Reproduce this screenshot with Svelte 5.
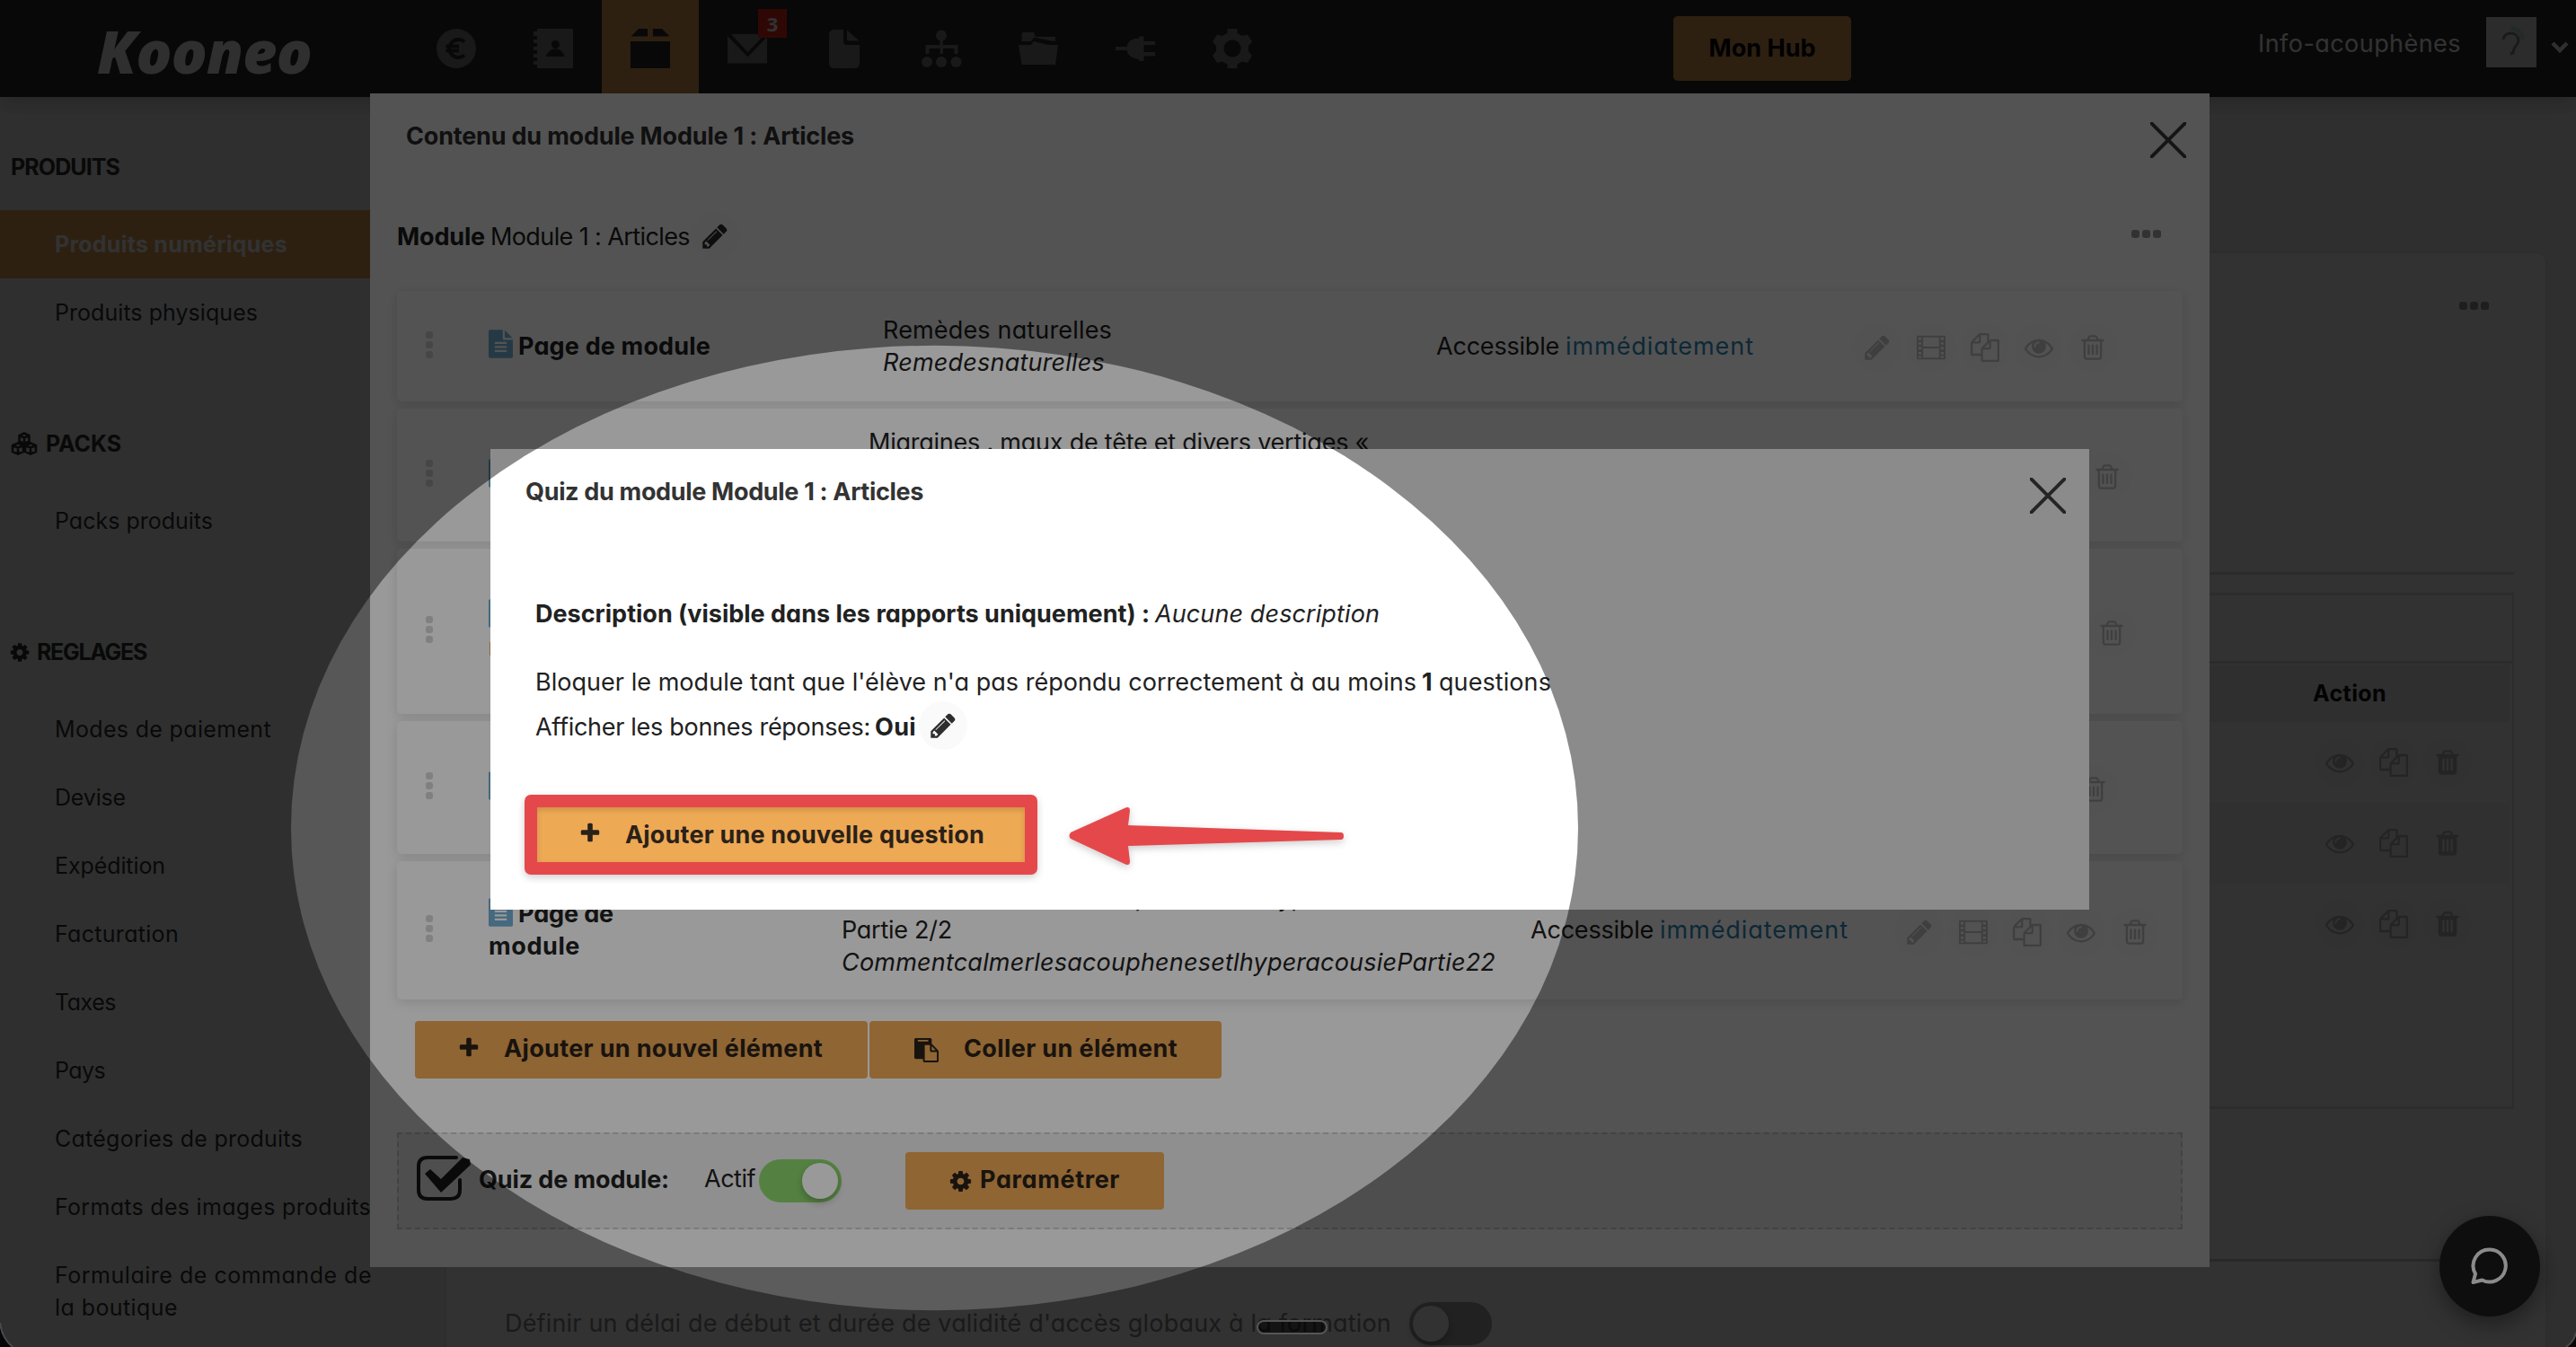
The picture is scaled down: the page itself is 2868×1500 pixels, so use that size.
<script>
  // Spreads the letters of a label so that it fills the given width.
  function fit(node, width) {
    const apply = () => {
      node.style.letterSpacing = '0px';
      const natural = node.getBoundingClientRect().width;
      const count = node.textContent.length;
      node.style.letterSpacing = (width - 1 - natural) / count + 'px';
    };
    apply();
    document.fonts?.ready.then(apply);
  }

  const trashBase =
    'm128 724v-948h-896v948q0 22 7 40.500t14.500 27 10.500 8.500h832q3 0 10.500-8.500t14.500-27 7-40.500zm-672-1076h448l-48-117q-7-9-17-11h-317q-10 2-17 11z';
  const trashLid =
    'm928 32v64q0 14-9 23t-23 9h-96v948q0 83-47 143.500t-113 60.500h-832q-66 0-113-58.500t-47-141.500v-952h-96q-14 0-23-9t-9-23v-64q0-14 9-23t23-9h309l70-167q15-37 54-63t79-26h320q40 0 79 26t54 63l70 167h309q14 0 23 9t9 23z';

  const glyphs = {
    trash:
      'M704 736v576q0 14-9 23t-23 9h-64q-14 0-23-9t-9-23v-576q0-14 9-23t23-9h64q14 0 23 9t9 23zm256 0v576q0 14-9 23t-23 9h-64q-14 0-23-9t-9-23v-576q0-14 9-23t23-9h64q14 0 23 9t9 23zm256 0v576q0 14-9 23t-23 9h-64q-14 0-23-9t-9-23v-576q0-14 9-23t23-9h64q14 0 23 9t9 23z' +
      trashBase + trashLid,
    trashFull:
      'M704 1376v-704q0-14-9-23t-23-9h-64q-14 0-23 9t-9 23v704q0 14 9 23t23 9h64q14 0 23-9t9-23zm256 0v-704q0-14-9-23t-23-9h-64q-14 0-23 9t-9 23v704q0 14 9 23t23 9h64q14 0 23-9t9-23zm256 0v-704q0-14-9-23t-23-9h-64q-14 0-23 9t-9 23v704q0 14 9 23t23 9h64q14 0 23-9t9-23zm-544-992h448l-48-117q-7-9-17-11h-317q-10 2-17 11z' +
      trashLid,
    pencil:
      'M491 1536l91-91-235-235-91 91v107h128v128h107zm523-928q0-22-22-22-10 0-17 7l-542 542q-7 7-7 17 0 22 22 22 10 0 17-7l542-542q7-7 7-17zm-54-192l416 416-832 832h-416v-416zm683 96q0 53-37 90l-166 166-416-416 166-165q36-38 90-38 53 0 91 38l235 234q37 39 37 91z',
    eye: 'M1664 960q-152-236-381-353 61 104 61 225 0 185-131.500 316.500t-316.500 131.500-316.500-131.500-131.500-316.500q0-121 61-225-229 117-381 353 133 205 333.500 326.500t434.500 121.500 434.500-121.500 333.500-326.500zm-720-384q0-20-14-34t-34-14q-125 0-214.500 89.500t-89.500 214.500q0 20 14 34t34 14 34-14 14-34q0-86 61-147t147-61q20 0 34-14t14-34zm848 384q0 34-20 69-140 230-376.500 368.500t-499.500 138.500-499.500-139-376.500-368q-20-35-20-69t20-69q140-229 376.500-368t499.500-139 499.500 139 376.500 368q20 35 20 69z',
    copy: 'M1696 384q40 0 68 28t28 68v1216q0 40-28 68t-68 28h-960q-40 0-68-28t-28-68v-288h-544q-40 0-68-28t-28-68v-672q0-40 20-88t48-76l408-408q28-28 76-48t88-20h416q40 0 68 28t28 68v328q68-40 128-40h416zm-544 213l-299 299h299v-299zm-640-384l-299 299h299v-299zm196 647l316-316v-416h-384v416q0 40-28 68t-68 28h-416v640h512v-256q0-40 20-88t48-76zm956 804v-1152h-384v416q0 40-28 68t-68 28h-416v640h896z',
    film: 'M64 160h1664q64 0 64 64v1344q0 64-64 64h-1664q-64 0-64-64v-1344q0-64 64-64zM110 270v150h180v-150zm0 300v150h180v-150zm0 300v150h180v-150zm0 300v150h180v-150zm0 260v110h180v-110zM400 270v570h990v-570zm0 680v570h990v-570zM1500 270v150h180v-150zm0 300v150h180v-150zm0 300v150h180v-150zm0 300v150h180v-150zm0 260v110h180v-110z',
    cog: 'M1152 896q0-106-75-181t-181-75-181 75-75 181 75 181 181 75 181-75 75-181zm512-109v222q0 12-8 23t-20 13l-185 28q-19 54-39 91 35 50 107 138 10 12 10 25t-9 23q-27 37-99 108t-94 71q-12 0-26-9l-138-108q-44 23-91 38-16 136-29 186-7 28-36 28h-222q-14 0-24.500-8.500t-11.500-21.500l-28-184q-49-16-90-37l-141 107q-10 9-25 9-14 0-25-11-126-114-165-168-7-10-7-23 0-12 8-23 15-21 51-66.500t54-70.500q-27-50-41-99l-183-27q-13-2-21-12.500t-8-23.500v-222q0-12 8-23t19-13l186-28q14-46 39-92-40-57-107-138-10-12-10-24 0-10 9-23 26-36 98.500-107.500t94.500-71.500q13 0 26 10l138 107q44-23 91-38 16-136 29-186 7-28 36-28h222q14 0 24.500 8.500t11.500 21.500l28 184q49 16 90 37l142-107q9-9 24-9 13 0 25 10 129 119 165 170 7 8 7 22 0 12-8 23-15 21-51 66.500t-54 70.500q26 50 41 98l183 28q13 2 21 12.500t8 23.500z',
    plus: 'M1600 736v192q0 40-28 68t-68 28h-416v416q0 40-28 68t-68 28h-192q-40 0-68-28t-28-68v-416h-416q-40 0-68-28t-28-68v-192q0-40 28-68t68-28h416v-416q0-40 28-68t68-28h192q40 0 68 28t28 68v416h416q40 0 68 28t28 68z',
    file: 'M1596 476q14 14 28 36h-472v-472q22 14 36 28zm-476 164h544v1056q0 40-28 68t-68 28h-1344q-40 0-68-28t-28-68v-1600q0-40 28-68t68-28h800v544q0 40 28 68t68 28zm160 736v-64q0-14-9-23t-23-9h-704q-14 0-23 9t-9 23v64q0 14 9 23t23 9h704q14 0 23-9t9-23zm0-256v-64q0-14-9-23t-23-9h-704q-14 0-23 9t-9 23v64q0 14 9 23t23 9h704q14 0 23-9t9-23zm0-256v-64q0-14-9-23t-23-9h-704q-14 0-23 9t-9 23v64q0 14 9 23t23 9h704q14 0 23-9t9-23z',
    paste:
      'M768 1664h896v-640h-416q-40 0-68-28t-28-68v-416h-384v1152zm256-1440v-64q0-13-9.500-22.500t-22.500-9.500h-704q-13 0-22.500 9.500t-9.500 22.500v64q0 13 9.500 22.500t22.500 9.500h704q13 0 22.500-9.500t9.500-22.500zm256 672h299l-299-299v299zm512 128v672q0 40-28 68t-68 28h-960q-40 0-68-28t-28-68v-160h-544q-40 0-68-28t-28-68v-1344q0-40 28-68t68-28h1088q40 0 68 28t28 68v328q21 13 36 28l408 408q28 28 48 76t20 88z'
  };

  const sections = [
    {
      title: 'PRODUITS',
      width: 122,
      items: [
        { label: 'Produits numériques', width: 260, active: true },
        { label: 'Produits physiques', width: 227 }
      ]
    },
    { title: 'PACKS', width: 85, icon: 'cubes', items: [{ label: 'Packs produits', width: 177 }] },
    {
      title: 'REGLAGES',
      width: 123,
      icon: 'cog',
      items: [
        { label: 'Modes de paiement', width: 242 },
        { label: 'Devise', width: 80 },
        { label: 'Expédition', width: 124 },
        { label: 'Facturation', width: 139 },
        { label: 'Taxes', width: 69 },
        { label: 'Pays', width: 57 },
        { label: 'Catégories de produits', width: 277 },
        { label: 'Formats des images produits', width: 353 },
        { label: 'Formulaire de commande de', width: 354, more: 'la boutique', moreWidth: 138 }
      ]
    }
  ];

  const actions = ['pencil', 'film', 'copy', 'eye', 'trash'];

  // Cards 2 to 4 lie mostly under the quiz dialog, so they carry only what shows around it.
  const cards = [
    {
      height: 123, cols: '70px 439px 616px 464px 1fr',
      label: [['Page de module', 215]],
      lines: [['Remèdes naturelles', 256]], slug: ['Remedesnaturelles', 248]
    },
    {
      height: 148, cols: '70px 423px 632px 480px 1fr',
      label: [null],
      lines: [['Migraines , maux de tête et divers vertiges «', 558], null, null]
    },
    { height: 184, cols: '70px 393px 767px 380px 1fr', label: [null, ['module', 103]], lines: [] },
    { height: 148, cols: '70px 439px 616px 465px 1fr', label: [null], lines: [] },
    {
      height: 154, cols: '70px 393px 767px 406px 1fr',
      label: [['Page de', 107], ['module', 103]],
      lines: [["Comment calmer les acouphènes et l'hyperacousie", 640], ['Partie 2/2', 124]],
      slug: ['CommentcalmerlesacouphenesetlhyperacousiePartie22', 729],
      access: true
    }
  ];
</script>

{#snippet glyph(name, size)}
  <svg class="glyph" width={size} height={size} viewBox="0 0 1792 1792" fill-rule="evenodd"><path d={glyphs[name]} /></svg>
{/snippet}

{#snippet cross()}
  <svg class="cross" viewBox="0 0 40 40"><path d="M0 0 40 40M40 0 0 40" /></svg>
{/snippet}

<div class="app">
  <header>
    <div class="logo"><span use:fit={240}>Kooneo</span></div>
    <nav>
      <div class="tab">
        <svg viewBox="0 0 44 44"><circle cx="22" cy="22" r="22" /><path class="cut" d="M31 14.500a10 10 0 1 0 0 15M10.500 19.500H25M10.500 24.500H25" /></svg>
      </div>
      <div class="tab">
        <svg viewBox="0 0 44 44"><path d="M4 0H44V44H4V40H0V36H4V32H0V28H4V24H0V20H4V16H0V12H4V8H0V3H4Z" /><path class="hole" d="M24.500 13a4.500 4.500 0 1 1-.1 0zM13.500 31c3-6 6-8.500 11-8.500S32 25 35 31z" /></svg>
      </div>
      <div class="tab current">
        <svg viewBox="0 0 44 44"><path d="M9 0H19V8.500H0.500zM25 0H35L43.500 8.500H25zM0 14H44V44H0z" /></svg>
      </div>
      <div class="tab">
        <svg viewBox="0 0 44 44"><path d="M4 6H42L22.500 26zM0 8 22.500 31.500 44 9V38.500H0z" /></svg>
        <b class="badge">3</b>
      </div>
      <div class="tab">
        <svg viewBox="0 0 44 44"><path d="M11 1H21V14q0 4 4 4H39V38q0 6-6 6H11q-6 0-6-6V7q0-6 6-6zM25 1.500 38.500 13.500H27q-2 0-2-2z" /></svg>
      </div>
      <div class="tab">
        <svg viewBox="0 0 44 44"><circle cx="22" cy="7.500" r="6" /><circle cx="6" cy="37" r="6" /><circle cx="22" cy="37" r="6" /><circle cx="38.500" cy="37" r="6" /><path d="M20.500 13h3.500v5h16.500v10h-4v-6H24v6h-3.500v-6H8.500v6h-4V18h16z" /></svg>
      </div>
      <div class="tab">
        <svg viewBox="0 0 44 44"><path d="M5 4H17l2 5H41v5L36 13.500 17 9.500 14 14H3.500V6zM0 18H13q2 0 3-3.500 1-1 3 0L33 18H44L41 40H3.500z" /></svg>
      </div>
      <div class="tab">
        <svg viewBox="0 0 44 44"><path d="M0 20H12.500Q14 11 26 10.500V8.500H31.500V14H44V18H31.500V26H44V30.500H31.500V36H26V34Q14 32.500 12.500 24H0z" /></svg>
      </div>
      <div class="tab">
        <svg viewBox="0 0 44 44" fill-rule="evenodd"><path d="M16.500 0H27.500V5L33 8 39 6.500 44 14.500 40 19V25L44 30 39 38 33 36.500 27.500 39.500V44H16.500V39.500L11 36.500 5 38 0 30 4 25V19L0 14.500 5 6.500 11 8 16.500 5zM22 12.500a9.500 9.500 0 1 0 .1 0z" /></svg>
      </div>
    </nav>
    <div class="hub"><b use:fit={120}>Mon Hub</b></div>
    <div class="user">
      <span use:fit={227}>Info-acouphènes</span>
      <svg class="avatar" viewBox="0 0 56 56"><rect width="56" height="56" /><path class="wave" d="M27 12q12 2 14 13" /><path class="ear" d="M19 25c1-9 16-10 17 1 0 6-6 6-6 14l-3 1" /></svg>
      <svg class="chevron" viewBox="0 0 20 14"><path d="M2 3 10 11 18 3" /></svg>
    </div>
  </header>

  <div class="page">
    <aside>
      {#each sections as section}
        <section>
          <h3>
            {#if section.icon === 'cog'}
              {@render glyph('cog', 25)}
            {:else if section.icon === 'cubes'}
              <svg class="cubes" viewBox="0 0 30 26"><path d="M15 1.500 20.500 4V10.500L15 13 9.500 10.500V4zM9.500 4 15 6.500 20.500 4M15 6.500V13M8 12.500 14 15V22L8 24.500 2 22V15zM2 15 8 17.500 14 15M8 17.500V24.500M22 12.500 28 15V22L22 24.500 16 22V15zM16 15 22 17.500 28 15M22 17.500V24.500" /></svg>
            {/if}
            <span use:fit={section.width}>{section.title}</span>
          </h3>
          {#each section.items as item}
            <div class="item" class:active={item.active}>
              <span use:fit={item.width}>{item.label}</span>
              {#if item.more}<span use:fit={item.moreWidth}>{item.more}</span>{/if}
            </div>
          {/each}
        </section>
      {/each}
    </aside>

    <main>
      <div class="panel">
        <div class="more"><i></i><i></i><i></i></div>
        <div class="divider"></div>
        <div class="table">
          <div class="caption"></div>
          <div class="row head"><b use:fit={83}>Action</b></div>
          {#each [0, 1, 2] as n}
            <div class="row" class:odd={n === 1}>
              <span class="round">{@render glyph('eye', 32)}</span>
              <span class="round">{@render glyph('copy', 32)}</span>
              <span class="round">{@render glyph('trashFull', 32)}</span>
            </div>
          {/each}
        </div>
        <div class="rule"></div>
        <div class="delay">
          <span use:fit={988}>Définir un délai de début et durée de validité d'accès globaux à la formation</span>
          <div class="switch off"><i></i></div>
        </div>
      </div>
    </main>
  </div>

  <div class="veil"></div>

  <div class="modal content">
    {@render cross()}
    <h2><span use:fit={500}>Contenu du module Module 1 : Articles</span></h2>
    <div class="subtitle">
      <b use:fit={99}>Module</b>
      <span use:fit={223}>Module 1 : Articles</span>
      <span class="round dark">{@render glyph('pencil', 32)}</span>
      <div class="more"><i></i><i></i><i></i></div>
    </div>
    <div class="cards">
      {#each cards as card}
        <div class="card" style:height="{card.height}px" style:grid-template-columns={card.cols}>
          <div class="handle"><i></i><i></i><i></i></div>
          <div class="label">
            {#each card.label as line, n}
              <div>
                {#if n === 0}<svg class="file" viewBox="128 0 1536 1792" fill-rule="evenodd"><path d={glyphs.file} /></svg>{/if}{#if line}<b use:fit={line[1]}>{line[0]}</b>{/if}
              </div>
            {/each}
          </div>
          <div class="text">
            {#each card.lines as line}<div>{#if line}<span use:fit={line[1]}>{line[0]}</span>{/if}</div>{/each}
            {#if card.slug}<div><em use:fit={card.slug[1]}>{card.slug[0]}</em></div>{/if}
          </div>
          <div class="access">
            {#if card.slug}<span use:fit={138}>Accessible</span><a use:fit={211}>immédiatement</a>{/if}
          </div>
          <div class="actions">
            {#each actions as name}<span class="round">{@render glyph(name, 32)}</span>{/each}
          </div>
        </div>
      {/each}
    </div>
    <div class="buttons">
      <div class="button add">{@render glyph('plus', 26)}<b use:fit={356}>Ajouter un nouvel élément</b></div>
      <div class="button paste">{@render glyph('paste', 27)}<b use:fit={239}>Coller un élément</b></div>
    </div>
    <div class="quiz">
      <svg class="check" viewBox="0 0 60 52"><path class="box" d="M44 3H12Q2 3 2 13V39Q2 49 12 49H38Q48 49 48 39V28" /><path d="M9 21 15 16 27 27 51 3 59 5 60 11 27 42z" /></svg>
      <b class="name" use:fit={213}>Quiz de module:</b>
      <span class="state" use:fit={58}>Actif</span>
      <div class="switch on"><i></i></div>
      <div class="button setup">{@render glyph('cog', 27)}<b use:fit={157}>Paramétrer</b></div>
    </div>
  </div>

  <div class="veil"></div>

  <div class="modal dialog">
    {@render cross()}
    <h2><span use:fit={444}>Quiz du module Module 1 : Articles</span></h2>
    <p class="description"><b use:fit={685}>Description (visible dans les rapports uniquement) :</b><em use:fit={251}>Aucune description</em></p>
    <p class="block"><span use:fit={982}>Bloquer le module tant que l'élève n'a pas répondu correctement à au moins</span><b class="count">1</b><span use:fit={126}>questions</span></p>
    <p class="answers"><span use:fit={374}>Afficher les bonnes réponses:</span><b use:fit={47}>Oui</b><span class="round dark">{@render glyph('pencil', 32)}</span></p>
    <div class="framed">{@render glyph('plus', 26)}<b use:fit={401}>Ajouter une nouvelle question</b></div>
  </div>

  <div class="chat">
    <svg viewBox="0 0 42 42"><path d="M22 2.500a18 18 0 1 1-8.500 34L3.500 39l2.500-9.500A18 18 0 0 1 22 2.500z" /></svg>
  </div>

  <svg class="spotlight" viewBox="0 0 2868 1500" fill-rule="evenodd">
    <path class="shade" d="M0 0H2868V1500H0zM324 922a716.500 537 0 1 0 1433 0a716.500 537 0 1 0-1433 0z" />
    <path class="arrow" d="M1192 927 1252 900q6-3 6 3L1256 919 1493 927q3 0 3 4t-3 4L1256 942 1258 959q0 6-6 3L1192 934q-3-3 0-7z" />
    <rect class="pill" x="1400" y="1471" width="77" height="14" rx="7" />
    <path class="corner" d="M0 1473Q2 1490 14 1500H0zM2868 1484Q2866 1494 2857 1500H2868z" />
    <path class="edge" d="M0 1473Q2 1490 14 1500M2868 1484Q2866 1494 2857 1500" />
  </svg>
</div>

<style>
  :global(body) {
    margin: 0;
    overflow: hidden;
  }
  .app {
    position: relative;
    width: 2868px;
    height: 1500px;
    overflow: hidden;
    background: #f4f4f4;
    font-family: Inter, 'Open Sans', sans-serif;
    font-feature-settings: 'cv11', 'ss03';
    font-size: 27px;
    line-height: 36px;
    color: #212121;
    white-space: nowrap;
  }
  h2, h3, p {
    margin: 0;
    font-size: inherit;
  }
  b, h2, h3 {
    font-weight: 700;
  }
  span, b, em, a {
    display: inline-block;
  }
  .glyph {
    display: block;
    fill: currentColor;
    flex: none;
  }

  /* top bar */
  header {
    position: relative;
    z-index: 1;
    display: flex;
    align-items: flex-start;
    height: 108px;
    background: #2e2e2e;
    box-shadow: 0 4px 24px rgba(0, 0, 0, 0.25);
  }
  .logo {
    width: 346px;
    height: 60px;
    padding: 26px 0 0 108px;
    font: italic 800 66px/60px 'Open Sans', 'Noto Sans', sans-serif;
    color: #f2f2f2;
  }
  nav {
    display: flex;
    fill: #808080;
  }
  .tab {
    position: relative;
    display: flex;
    justify-content: center;
    width: 108px;
    height: 108px;
    padding-top: 32px;
    box-sizing: border-box;
  }
  .tab svg {
    width: 44px;
    height: 44px;
    overflow: visible;
  }
  .current {
    background: #eba75a;
    fill: #2e2e2e;
  }
  .cut {
    fill: none;
    stroke: #2e2e2e;
    stroke-width: 4;
  }
  .hole {
    fill: #2e2e2e;
  }
  .badge {
    position: absolute;
    left: 66px;
    top: 10px;
    width: 32px;
    height: 32px;
    background: #ef3020;
    color: #fff;
    font: 700 22px/32px 'Open Sans', sans-serif;
    text-align: center;
  }
  .hub {
    width: 198px;
    height: 72px;
    margin: 18px 0 0 437px;
    border-radius: 5px;
    background: #eba75a;
    color: #000;
    line-height: 71px;
    text-align: center;
  }
  .user {
    display: flex;
    align-items: center;
    margin: 19px 0 0 453px;
    height: 56px;
    color: #fff;
  }
  .user span {
    margin-top: 4px;
  }
  .avatar {
    width: 56px;
    height: 56px;
    margin-left: 28px;
    fill: #e4e4e4;
  }
  .ear, .wave {
    fill: none;
    stroke: #8a8a8a;
    stroke-width: 3;
  }
  .wave {
    stroke: #bcd4d2;
    stroke-width: 5;
  }
  .chevron {
    width: 20px;
    height: 14px;
    margin: 10px 0 0 16px;
    fill: none;
    stroke: #f0f0f0;
    stroke-width: 4.500;
  }

  /* side menu */
  .page {
    display: flex;
    height: 1392px;
  }
  aside {
    width: 497px;
    font-size: 25px;
    color: #333;
    padding-top: 21px;
  }
  section {
    padding-bottom: 50px;
    border-bottom: 1px solid #ededed;
  }
  h3 {
    display: flex;
    align-items: center;
    height: 36px;
    padding: 39px 0 30px 12px;
    gap: 9px;
  }
  .cubes {
    width: 30px;
    height: 26px;
    fill: none;
    stroke: #333;
    stroke-width: 2.600;
  }
  h3 > .glyph {
    margin: 0 -2px 0 -2px;
    width: 24px;
  }
  .item {
    display: flex;
    flex-direction: column;
    align-items: flex-start;
    min-height: 36px;
    padding: 20px 0 20px 61px;
  }
  .active {
    background: #eba75a;
    color: #fff;
    font-weight: 700;
  }

  /* product page behind the windows */
  main {
    flex: 1;
    padding: 174px 34px 0 0;
  }
  .panel {
    height: 1260px;
    border-radius: 10px;
    background: #fff;
    box-shadow: 0 0 10px rgba(0, 0, 0, 0.1);
    padding: 54px 35px 0 66px;
    box-sizing: border-box;
  }
  .more {
    display: flex;
    gap: 3px;
  }
  .more i {
    width: 9px;
    height: 9px;
    border-radius: 3px;
    background: #999;
  }
  .panel > .more {
    margin-left: 2175px;
  }
  .divider {
    height: 3px;
    margin: 292px 0 20px;
    background: #dcdcdc;
  }
  .table {
    height: 569px;
    border: 2px solid #e4e4e4;
    border-width: 3px 2px;
    padding-right: 3px;
  }
  .caption {
    height: 73px;
    border-bottom: 3px solid #e0e0e0;
    margin-right: -3px;
  }
  .row {
    display: flex;
    align-items: center;
    justify-content: flex-end;
    gap: 6px;
    height: 90px;
    padding-right: 42px;
    box-sizing: border-box;
  }
  .head {
    height: 64px;
    margin-top: 1px;
    background: #f0f0f0;
    padding-right: 137px;
    color: #111;
    font-size: 25px;
  }
  .odd {
    background: #f8f8f8;
  }
  .round {
    display: inline-flex;
    align-items: center;
    justify-content: center;
    width: 54px;
    height: 54px;
    border-radius: 50%;
    background: #fafafa;
    color: #c4c4c4;
    flex: none;
  }
  .dark {
    color: #2e2e2e;
  }
  .row .round {
    color: #bbb;
  }
  .odd .round {
    background: none;
  }
  .rule {
    height: 3px;
    margin-top: 167px;
    background: #dcc8c8;
  }
  .delay {
    display: flex;
    align-items: center;
    gap: 20px;
    margin-top: 45px;
    margin-left: -1px;
    color: #8a8a8a;
  }
  .switch {
    display: flex;
    width: 92px;
    height: 48px;
    padding: 4px;
    border-radius: 24px;
    box-sizing: border-box;
  }
  .switch i {
    width: 40px;
    height: 40px;
    border-radius: 50%;
    background: #fff;
    box-shadow: 0 4px 8px rgba(0, 0, 0, 0.25);
  }
  .off {
    background: #ababab;
  }
  .on {
    background: #8cd86d;
    justify-content: flex-end;
    margin-left: 4px;
  }

  /* stacked windows */
  .veil {
    position: absolute;
    inset: 0;
    z-index: 2;
    background: rgba(0, 0, 0, 0.4);
  }
  .modal {
    position: absolute;
    z-index: 2;
    background: #fff;
    box-sizing: border-box;
  }
  .content {
    left: 412px;
    top: 104px;
    width: 2048px;
    height: 1307px;
    padding: 30px 30px 0;
  }
  .dialog {
    left: 546px;
    top: 500px;
    width: 1780px;
    height: 513px;
    padding: 30px 0 0 38px;
  }
  .cross {
    position: absolute;
    top: 32px;
    right: 26px;
    width: 40px;
    height: 40px;
    stroke: #444;
    stroke-width: 4;
  }
  h2 {
    color: #333;
    padding-left: 1px;
  }
  .content h2 {
    padding-left: 10px;
  }
  .subtitle {
    display: flex;
    align-items: center;
    height: 54px;
    margin-top: 67px;
  }
  .subtitle > span:first-of-type {
    margin-left: 6px;
  }
  .subtitle .round {
    margin-left: 1px;
    margin-top: -2px;
  }
  .subtitle .more {
    margin-left: auto;
    margin-right: 24px;
    margin-top: -8px;
  }
  .cards {
    display: flex;
    flex-direction: column;
    gap: 8px;
    margin-top: 33px;
  }
  .card {
    display: grid;
    align-items: center;
    padding-left: 32px;
    box-sizing: border-box;
    border-radius: 5px;
    background: #fff;
    box-shadow: 0 3px 14px rgba(0, 0, 0, 0.13);
  }
  .handle {
    display: flex;
    flex-direction: column;
    gap: 3px;
    margin-top: -4px;
  }
  .handle i {
    width: 8px;
    height: 8px;
    border-radius: 3px;
    background: #d6d6d6;
  }
  .label > div {
    display: flex;
    align-items: center;
    height: 36px;
  }
  .text > div {
    height: 36px;
  }
  .file {
    width: 27px;
    height: 32px;
    margin: -5px 6px 0 0;
    fill: #74afd4;
  }
  .access {
    display: flex;
    gap: 7px;
  }
  .access a {
    color: #2b7ca8;
  }
  .actions {
    display: flex;
    gap: 6px;
    margin-top: 3px;
  }
  .buttons {
    display: flex;
    gap: 2px;
    margin: 24px 0 0 20px;
  }
  .button {
    display: flex;
    align-items: center;
    height: 64px;
    box-sizing: border-box;
    border-radius: 4px;
    background: #eda855;
    color: #2a2119;
  }
  .button b {
    margin-top: -3px;
  }
  .add {
    width: 504px;
    padding-left: 47px;
    gap: 26px;
  }
  .add .glyph {
    margin-top: -5px;
  }
  .paste {
    width: 392px;
    padding-left: 50px;
    gap: 28px;
  }
  .quiz {
    display: flex;
    align-items: center;
    height: 108px;
    margin-top: 60px;
    padding-left: 20px;
    box-sizing: border-box;
    border: 2px dashed #cbcbcb;
    background: #efefef;
  }
  .check {
    width: 60px;
    height: 52px;
    margin: -6px 9px 0 0;
    fill: #212121;
  }
  .box {
    fill: none;
    stroke: #212121;
    stroke-width: 4;
    stroke-linecap: round;
  }
  .state {
    margin-left: 39px;
    margin-top: -4px;
  }
  .name {
    margin-top: -2px;
  }
  .setup {
    width: 288px;
    margin-left: 71px;
    padding-left: 48px;
    gap: 8px;
  }

  /* quiz dialog */
  .dialog p {
    display: flex;
    align-items: center;
    margin-left: 12px;
    height: 36px;
    gap: 6px;
  }
  .dialog .description {
    margin-top: 100px;
  }
  .dialog .block {
    margin-top: 40px;
  }
  .count {
    width: 13px;
  }
  .dialog .answers {
    margin-top: 14px;
    gap: 5px;
  }
  .answers .round {
    margin: -4px 0 0 -2px;
  }
  .framed {
    display: flex;
    align-items: center;
    width: 571px;
    height: 89px;
    margin: 57px 0 0;
    padding-left: 46px;
    gap: 26px;
    box-sizing: border-box;
    border: 14px solid #e5484b;
    border-radius: 7px;
    background: #eea955;
    box-shadow: 0 3px 8px rgba(0, 0, 0, 0.2), inset 0 3px 6px rgba(0, 0, 0, 0.15);
    color: #2a2119;
  }
  .framed .glyph {
    margin-top: -3px;
  }

  /* floating layers */
  .chat {
    position: absolute;
    z-index: 3;
    right: 40px;
    bottom: 34px;
    display: flex;
    align-items: center;
    justify-content: center;
    width: 112px;
    height: 112px;
    border-radius: 50%;
    background: #1b1b1b;
    box-shadow: 0 8px 24px rgba(0, 0, 0, 0.4);
  }
  .chat svg {
    width: 42px;
    height: 42px;
    margin-right: 2px;
    fill: none;
    stroke: #fff;
    stroke-width: 4;
    stroke-linejoin: round;
  }
  .spotlight {
    position: absolute;
    inset: 0;
    z-index: 4;
    width: 2868px;
    height: 1500px;
  }
  .shade {
    fill: rgba(0, 0, 0, 0.455);
  }
  .arrow {
    fill: #e5484b;
    filter: drop-shadow(0 3px 4px rgba(0, 0, 0, 0.2));
  }
  .pill {
    fill: rgba(0, 0, 0, 0.6);
    stroke: #555;
    stroke-width: 2;
  }
  .corner {
    fill: #05060a;
  }
  .edge {
    fill: none;
    stroke: #4a4a4a;
    stroke-width: 2;
  }
</style>
